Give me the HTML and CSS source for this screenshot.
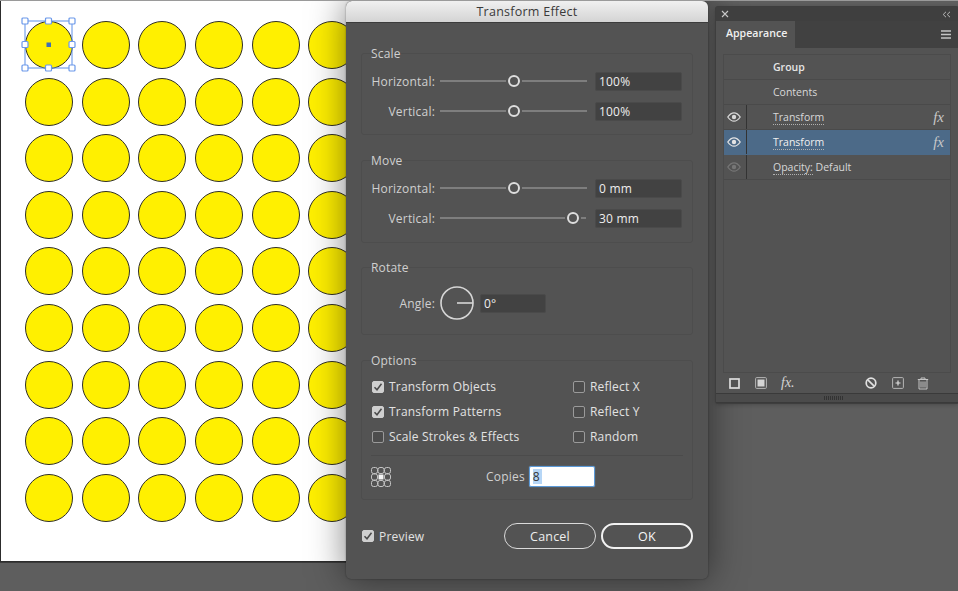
FILE: index.html
```html
<!DOCTYPE html>
<html lang="en">
<head>
<meta charset="utf-8">
<title>Transform Effect</title>
<link rel="stylesheet" href="styles.css">
</head>
<body>
<div class="desk">
  <div class="artboard">
    <div class="dots">
      <div class="dot"></div><div class="dot"></div><div class="dot"></div><div class="dot"></div><div class="dot"></div><div class="dot"></div>
      <div class="dot"></div><div class="dot"></div><div class="dot"></div><div class="dot"></div><div class="dot"></div><div class="dot"></div>
      <div class="dot"></div><div class="dot"></div><div class="dot"></div><div class="dot"></div><div class="dot"></div><div class="dot"></div>
      <div class="dot"></div><div class="dot"></div><div class="dot"></div><div class="dot"></div><div class="dot"></div><div class="dot"></div>
      <div class="dot"></div><div class="dot"></div><div class="dot"></div><div class="dot"></div><div class="dot"></div><div class="dot"></div>
      <div class="dot"></div><div class="dot"></div><div class="dot"></div><div class="dot"></div><div class="dot"></div><div class="dot"></div>
      <div class="dot"></div><div class="dot"></div><div class="dot"></div><div class="dot"></div><div class="dot"></div><div class="dot"></div>
      <div class="dot"></div><div class="dot"></div><div class="dot"></div><div class="dot"></div><div class="dot"></div><div class="dot"></div>
      <div class="dot"></div><div class="dot"></div><div class="dot"></div><div class="dot"></div><div class="dot"></div><div class="dot"></div>
    </div>
    <svg class="selection" width="56" height="56" viewBox="0 0 56 56">
      <rect x="4" y="4" width="47" height="47" fill="none" stroke="#5d8fe8" stroke-width="1"/>
      <g fill="#fff" stroke="#6a98ea" stroke-width="1.200">
        <rect x="1" y="1" width="6" height="6" rx="1"/><rect x="24.500" y="1" width="6" height="6" rx="1"/><rect x="48" y="1" width="6" height="6" rx="1"/>
        <rect x="1" y="24.500" width="6" height="6" rx="1"/><rect x="48" y="24.500" width="6" height="6" rx="1"/>
        <rect x="1" y="48" width="6" height="6" rx="1"/><rect x="24.500" y="48" width="6" height="6" rx="1"/><rect x="48" y="48" width="6" height="6" rx="1"/>
      </g>
      <rect x="25.500" y="25.500" width="4.500" height="4.500" fill="#3f6fb5"/>
    </svg>
  </div>

  <section class="dialog">
    <header class="dialog-title">Transform Effect</header>
    <div class="dialog-body">
      <div class="group group-scale">
        <div class="legend">Scale</div>
        <div class="row"><span class="row-label">Horizontal:</span><div class="slider"><span class="track track-grow-a"></span><span class="thumb"></span><span class="track track-grow-a"></span></div><div class="field">100%</div></div>
        <div class="row"><span class="row-label">Vertical:</span><div class="slider"><span class="track track-grow-a"></span><span class="thumb"></span><span class="track track-grow-a"></span></div><div class="field">100%</div></div>
      </div>
      <div class="group group-move">
        <div class="legend">Move</div>
        <div class="row"><span class="row-label">Horizontal:</span><div class="slider"><span class="track track-grow-a"></span><span class="thumb"></span><span class="track track-grow-a"></span></div><div class="field">0 mm</div></div>
        <div class="row"><span class="row-label">Vertical:</span><div class="slider"><span class="track track-grow-b"></span><span class="thumb"></span><span class="track track-short"></span></div><div class="field">30 mm</div></div>
      </div>
      <div class="group group-rotate">
        <div class="legend">Rotate</div>
        <div class="row rotate-row">
          <span class="row-label">Angle:</span>
          <svg class="dial" width="34" height="34" viewBox="0 0 34 34"><circle cx="17" cy="17" r="16" fill="none" stroke="#d6d6d6" stroke-width="1.600"/><line x1="17" y1="17" x2="33" y2="17" stroke="#d6d6d6" stroke-width="1.600"/></svg>
          <div class="field field-angle">0°</div>
        </div>
      </div>
      <div class="group group-options">
        <div class="legend">Options</div>
        <div class="opts">
          <label class="opt"><span class="check on"><svg width="10" height="10" viewBox="0 0 10 10"><path d="M1.500 5.200 4 7.800 8.500 1.800" fill="none" stroke="#4a4a4a" stroke-width="1.500"/></svg></span>Transform Objects</label>
          <label class="opt"><span class="check"></span>Reflect X</label>
          <label class="opt"><span class="check on"><svg width="10" height="10" viewBox="0 0 10 10"><path d="M1.500 5.200 4 7.800 8.500 1.800" fill="none" stroke="#4a4a4a" stroke-width="1.500"/></svg></span>Transform Patterns</label>
          <label class="opt"><span class="check"></span>Reflect Y</label>
          <label class="opt"><span class="check"></span>Scale Strokes &amp; Effects</label>
          <label class="opt"><span class="check"></span>Random</label>
        </div>
        <div class="copies-row">
          <svg class="locator" width="20" height="20" viewBox="0 0 20 20">
            <g fill="none" stroke="#c4c4c4" stroke-width="1">
              <rect x=".5" y=".5" width="6" height="6" rx="2"/><rect x="7" y=".5" width="6" height="6" rx="2"/><rect x="13.500" y=".5" width="6" height="6" rx="2"/>
              <rect x=".5" y="7" width="6" height="6" rx="2"/><rect x="13.500" y="7" width="6" height="6" rx="2"/>
              <rect x=".5" y="13.500" width="6" height="6" rx="2"/><rect x="7" y="13.500" width="6" height="6" rx="2"/><rect x="13.500" y="13.500" width="6" height="6" rx="2"/>
            </g>
            <rect x="7.500" y="7.500" width="5" height="5" fill="#f4f4f4"/>
          </svg>
          <span class="copies-label">Copies</span>
          <div class="copies-input"><span class="sel">8</span></div>
        </div>
      </div>
      <div class="dialog-foot">
        <label class="opt preview"><span class="check on"><svg width="10" height="10" viewBox="0 0 10 10"><path d="M1.500 5.200 4 7.800 8.500 1.800" fill="none" stroke="#4a4a4a" stroke-width="1.500"/></svg></span>Preview</label>
        <div class="buttons">
          <button class="btn" type="button">Cancel</button>
          <button class="btn btn-ok" type="button">OK</button>
        </div>
      </div>
    </div>
  </section>

  <aside class="panel">
    <div class="panel-strip">
      <svg width="8" height="8" viewBox="0 0 8 8"><path d="M1 1 7 7M7 1 1 7" stroke="#c8c8c8" stroke-width="1.100"/></svg>
      <svg width="9" height="7" viewBox="0 0 9 7"><path d="M4 .8 1.200 3.500 4 6.200M8 .8 5.200 3.500 8 6.200" fill="none" stroke="#b8b8b8" stroke-width="1"/></svg>
    </div>
    <div class="panel-tabs">
      <div class="tab">Appearance</div>
      <svg class="menu" width="10" height="9" viewBox="0 0 10 9"><path d="M0 1h10M0 4.500h10M0 8h10" stroke="#c4c4c4" stroke-width="1.600"/></svg>
    </div>
    <div class="list">
      <div class="item"><span class="eye-cell"></span><span class="item-text strong">Group</span></div>
      <div class="item"><span class="eye-cell"></span><span class="item-text">Contents</span></div>
      <div class="item ruled">
        <span class="eye-cell"><svg width="14" height="10" viewBox="0 0 14 10"><path d="M.8 5C3 1.800 5 .8 7 .8S11 1.800 13.200 5C11 8.200 9 9.200 7 9.200S3 8.200 .8 5Z" fill="none" stroke="#d8d8d8" stroke-width="1.300"/><circle cx="7" cy="5" r="2.200" fill="#d8d8d8"/></svg></span>
        <span class="item-text"><span class="link">Transform</span></span><span class="fx">fx</span>
      </div>
      <div class="item ruled active">
        <span class="eye-cell"><svg width="14" height="10" viewBox="0 0 14 10"><path d="M.8 5C3 1.800 5 .8 7 .8S11 1.800 13.200 5C11 8.200 9 9.200 7 9.200S3 8.200 .8 5Z" fill="none" stroke="#e4e4e4" stroke-width="1.300"/><circle cx="7" cy="5" r="2.200" fill="#e4e4e4"/></svg></span>
        <span class="item-text"><span class="link">Transform</span></span><span class="fx">fx</span>
      </div>
      <div class="item ruled">
        <span class="eye-cell"><svg width="14" height="10" viewBox="0 0 14 10"><path d="M.8 5C3 1.800 5 .8 7 .8S11 1.800 13.200 5C11 8.200 9 9.200 7 9.200S3 8.200 .8 5Z" fill="none" stroke="#767676" stroke-width="1.300"/><circle cx="7" cy="5" r="2.200" fill="#767676"/></svg></span>
        <span class="item-text"><span class="link">Opacity:</span> Default</span>
      </div>
    </div>
    <div class="panel-foot">
      <svg class="fi fi-1" width="11" height="11" viewBox="0 0 11 11"><rect x="1" y="1" width="9" height="9" fill="none" stroke="#dcdcdc" stroke-width="1.700"/></svg>
      <svg class="fi fi-2" width="12" height="12" viewBox="0 0 12 12"><rect x=".6" y=".6" width="10.800" height="10.800" rx="1" fill="none" stroke="#b4b4b4" stroke-width="1"/><rect x="2.500" y="2.500" width="7" height="7" fill="#d4d4d4"/></svg>
      <span class="foot-fx">fx.</span>
      <span class="foot-space"></span>
      <svg class="fi fi-4" width="12" height="12" viewBox="0 0 12 12"><circle cx="6" cy="6" r="4.800" fill="none" stroke="#e0e0e0" stroke-width="1.700"/><path d="M2.800 2.800 9.200 9.200" stroke="#e0e0e0" stroke-width="1.700"/></svg>
      <svg class="fi fi-5" width="12" height="12" viewBox="0 0 12 12"><rect x=".6" y=".6" width="10.800" height="10.800" rx="1" fill="none" stroke="#b4b4b4" stroke-width="1"/><path d="M6 3.500v5M3.500 6h5" stroke="#e0e0e0" stroke-width="1.200"/></svg>
      <svg class="fi fi-6" width="12" height="13" viewBox="0 0 12 13"><path d="M.8 2.500h10.400M4 2.500V1h4v1.500M2 3v9h8V3" fill="none" stroke="#c4c4c4" stroke-width="1"/><path d="M4 4.500V10.500M6 4.500V10.500M8 4.500V10.500" stroke="#c4c4c4" stroke-width="1"/></svg>
    </div>
    <div class="panel-grip"><span class="grip-marks"></span></div>
  </aside>
</div>
</body>
</html>
```

FILE: styles.css
```css
* { box-sizing: border-box; }
html, body { margin: 0; padding: 0; }
body { width: 958px; height: 591px; overflow: hidden; background: #5e5e5e; font-family: "Open Sans", "Noto Sans", sans-serif; }

.desk { position: relative; width: 958px; height: 591px; overflow: hidden; border-top: 1px solid #9a9a9a; }

/* Artboard */
.artboard { position: absolute; left: 0; top: 0; width: 350px; height: 561px; background: #fff; border-left: 1px solid #2c2c2c; border-bottom: 1px solid #2c2c2c; box-shadow: 0 1px 0 #3a3a3a; }
.dots { display: grid; grid-template-columns: repeat(6, 48px); grid-auto-rows: 48px; column-gap: 8.7px; row-gap: 8.62px; padding: 20px 0 0 24px; }
.dot { width: 48px; height: 48px; border-radius: 50%; background: #fff000; border: 1.7px solid #302f26; }
.selection { position: absolute; left: 20px; top: 16px; }

/* Dialog */
.dialog { position: absolute; left: 346px; top: 0; width: 362px; height: 578px; background: #535353; border-radius: 6px 6px 5px 5px; box-shadow: 0 0 36px rgba(0,0,0,.5), 0 0 2px rgba(0,0,0,.4); overflow: visible; }
.dialog-title { height: 22px; background: linear-gradient(#f0f0f0, #d4d4d4); border-bottom: 1px solid #3c3c3c; border-radius: 6px 6px 0 0; font-size: 12.5px; line-height: 22px; text-align: center; color: #3a3a3a; letter-spacing: .25px; }
.dialog-body { padding: 30px 15px 0 15px; display: flex; flex-direction: column; }

.group { position: relative; border: 1px solid #4d4d4d; border-radius: 3px; padding: 0 9px; }
.legend { height: 16px; margin-top: -8px; font-size: 12px; line-height: 16px; color: #d0d0d0; letter-spacing: .2px; }
.group-scale { height: 82px; margin-bottom: 25px; }
.group-move { height: 83px; margin-bottom: 24px; }
.group-rotate { height: 68px; margin-bottom: 25px; }
.group-options { height: 140px; }

.row { display: flex; align-items: center; height: 20px; margin-bottom: 10px; }
.legend + .row { margin-top: 9px; }
.row-label { width: 64px; text-align: right; font-size: 12px; color: #d0d0d0; letter-spacing: .2px; white-space: nowrap; }
.slider { display: flex; align-items: center; gap: 2px; width: 148px; margin-left: 5px; }
.track { display: block; height: 2px; background: #7e7e7e; }
.track-grow-a { width: 65.5px; }
.track-grow-b { width: 125px; }
.track-short { width: 5px; }
.thumb { flex: none; display: block; width: 12px; height: 12px; border: 2px solid #dedede; border-radius: 50%; }
.field { width: 87px; height: 19px; margin-left: 7px; padding-left: 3px; background: #424242; border: 1px solid #4a4a4a; border-radius: 2px; font-size: 12px; line-height: 17px; color: #eeeeee; letter-spacing: .2px; }

.legend + .rotate-row { height: 34px; margin-top: 10px; }
.dial { flex: none; margin-left: 5px; }
.field-angle { width: 66px; margin-left: 6px; }

.opts { display: grid; grid-template-columns: 201px 1fr; grid-auto-rows: 25px; margin-top: 5px; }
.opt { display: flex; align-items: center; gap: 5px; font-size: 12px; color: #e2e2e2; letter-spacing: .2px; white-space: nowrap; }
.check { flex: none; display: flex; align-items: center; justify-content: center; width: 12px; height: 12px; margin-left: 1px; border: 1px solid #9a9a9a; border-radius: 2px; background: #4c4c4c; }
.check.on { background: #cfcfcf; border-color: #cfcfcf; }

.copies-row { display: flex; align-items: center; margin-top: 6px; padding-top: 10px; border-top: 1px solid #4b4b4b; }
.locator { flex: none; }
.copies-label { margin-left: 95px; font-size: 12px; color: #d0d0d0; letter-spacing: .2px; }
.copies-input { width: 66px; height: 21px; margin-left: 4px; padding: 2px 0 0 3px; background: #fff; border: 1px solid #5c9ad8; border-radius: 2px; box-shadow: 0 0 1px #7db5ea; font-size: 12px; line-height: 15px; color: #333; }
.sel { display: inline-block; width: 9px; height: 15px; background: #b6d6f6; }

.dialog-foot { display: flex; align-items: center; justify-content: space-between; margin-top: 23px; }
.preview { color: #e2e2e2; }
.buttons { display: flex; gap: 5px; }
.btn { width: 92px; height: 26px; padding: 0; background: #535353; border: 1.5px solid #dadada; border-radius: 13px; font-family: inherit; font-size: 12.5px; color: #eee; letter-spacing: .2px; }
.btn-ok { border: 2px solid #f2f2f2; color: #f6f6f6; }

/* Appearance panel */
.panel { position: absolute; left: 716px; top: 6px; width: 242px; height: 396px; background: #535353; box-shadow: 0 0 0 1px #3e3e3e, 0 1px 5px rgba(0,0,0,.3); border-radius: 2px; display: flex; flex-direction: column; }
.panel-strip { display: flex; align-items: center; justify-content: space-between; height: 14px; padding: 0 7px 0 5px; background: #3f3f3f; flex: none; }
.panel-tabs { display: flex; align-items: stretch; justify-content: space-between; height: 27px; background: #414141; flex: none; padding-right: 7px; }
.tab { width: 79px; background: #535353; font-size: 10.6px; font-weight: 600; line-height: 25px; padding-left: 10px; color: #f0f0f0; }
.menu { align-self: center; }
.list { margin: 6px 7px 0 7px; height: 319px; border: 1px solid #4b4b4b; flex: none; }
.item { display: flex; align-items: center; height: 25px; border-bottom: 1px solid #4a4a4a; font-size: 10.5px; color: #d8d8d8; position: relative; }
.eye-cell { flex: none; display: flex; align-items: center; justify-content: center; width: 23px; height: 100%; padding-right: 2px; }
.ruled .eye-cell { border-right: 1px solid #333; }
.item-text { margin-left: 26px; flex: 1; line-height: 16px; }
.strong { color: #e6e6e6; font-weight: 600; }
.link { border-bottom: 1px dotted #b0b0b0; }
.active { background: #4c6a88; color: #f0f0f0; border-bottom-color: #4c6a88; }
.fx { font-family: "Liberation Serif", serif; font-style: italic; font-size: 15px; line-height: 16px; color: #c8c8c8; margin-right: 6px; }
.panel-foot { display: flex; align-items: center; height: 20px; padding-left: 13px; flex: none; }
.fi { flex: none; }
.fi-2 { margin-left: 15px; }
.foot-fx { margin-left: 14px; font-family: "Liberation Serif", serif; font-style: italic; font-size: 14px; color: #d4d4d4; line-height: 1; }
.foot-space { width: 70px; flex: none; }
.fi-5 { margin-left: 15px; }
.fi-6 { margin-left: 13px; }
.panel-grip { display: flex; align-items: center; justify-content: center; flex: 1; background: #4b4b4b; border-top: 1px solid #3a3a3a; border-bottom: 1px solid #3a3a3a; padding-right: 7px; }
.grip-marks { display: block; width: 20px; height: 4px; background: repeating-linear-gradient(90deg, #333 0 1px, transparent 1px 2px); }
```
